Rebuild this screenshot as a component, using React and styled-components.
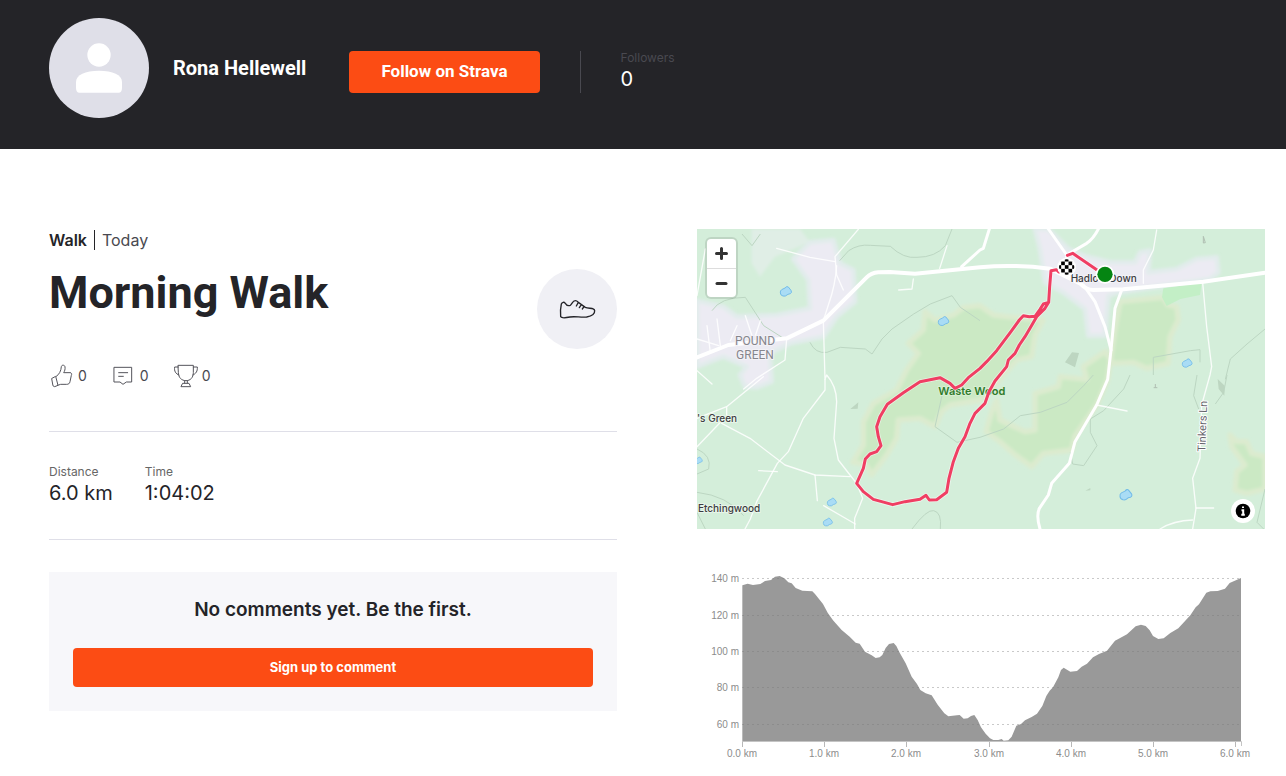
import React from 'react';
import styled, { createGlobalStyle } from 'styled-components';

const GlobalStyle = createGlobalStyle`
  *, *::before, *::after { box-sizing: border-box; }
  body {
    margin: 0;
    background: #fff;
    color: #242428;
    font-family: Inter, 'Liberation Sans', sans-serif;
  }
  h1, h2, p, dl, dd, ul { margin: 0; padding: 0; }
  svg { display: block; }
`;

const Header = styled.header`
  display: flex;
  align-items: center;
  gap: 43px;
  padding: 18px 21px 31px 49px;
  background: #242428;
  color: #fff;
`;

const Athlete = styled.a`
  display: flex;
  align-items: center;
  gap: 24px;
  color: inherit;
  text-decoration: none;
  font: 700 20px/26px Roboto, sans-serif;
`;

const Avatar = styled.span`
  width: 100px;
  height: 100px;
  border-radius: 50%;
  background: #dfdfe8;
  overflow: hidden;
`;

const Actions = styled.div`
  display: flex;
  align-items: center;
  gap: 40px;
  padding-top: 8px;
`;

const Button = styled.button`
  display: block;
  width: ${(p) => (p.$block ? '100%' : 'auto')};
  padding: ${(p) => (p.$block ? '9px 16px 10px' : '10px 32px 12px')};
  border: 0;
  border-radius: 4px;
  background: #fc4c14;
  color: #fff;
  font-family: ${(p) => (p.$block ? 'Inter' : 'Roboto')}, sans-serif;
  font-weight: 700;
  font-size: ${(p) => (p.$block ? 13 : 17)}px;
  line-height: 20px;
  cursor: pointer;
`;

const Followers = styled.dl`
  padding-left: 40px;
  border-left: 1px solid #494950;
`;

const Term = styled.dt`
  color: ${(p) => (p.$dim ? '#494950' : '#666')};
  font-size: 12px;
  line-height: ${(p) => (p.$dim ? 14 : 15)}px;
`;

const Value = styled.dd`
  font-size: 20px;
  line-height: 28px;
`;

const Main = styled.main`
  display: grid;
  grid-template-columns: minmax(0, 1fr) minmax(0, 1fr);
  align-items: start;
  gap: 80px;
  padding: 80px 21px 0 49px;
`;

const Column = styled.section`
  display: flex;
  flex-direction: column;
`;

const Kind = styled.p`
  display: flex;
  padding-top: 1px;
  font-size: 16px;
  line-height: 20px;
`;

const KindName = styled.strong`
  padding-right: 7px;
  border-right: 1px solid #242428;
  font-weight: 600;
`;

const When = styled.time`
  padding-left: 7px;
  color: #494950;
`;

const TitleRow = styled.div`
  display: flex;
  justify-content: space-between;
  margin-top: 19px;
`;

const Title = styled.h1`
  font-family: Roboto, sans-serif;
  font-size: 45px;
  line-height: 48px;
  font-weight: 700;
`;

const Badge = styled.div`
  display: grid;
  place-items: center;
  width: 80px;
  height: 80px;
  border-radius: 50%;
  background: #f0f0f5;
`;

const Counts = styled.ul`
  display: flex;
  gap: 25px;
  padding: 14px 0 42px 1px;
  list-style: none;
`;

const Count = styled.li`
  display: flex;
  align-items: center;
  gap: 4px;
  color: #494950;
  font-size: 14px;
  line-height: 26px;
`;

const Stats = styled.dl`
  display: flex;
  gap: 32px;
  padding: 32px 0;
  border: 1px solid #dfdfe8;
  border-width: 1px 0;
`;

const Comments = styled.section`
  margin-top: 32px;
  padding: 24px;
  background: #f7f7fa;
`;

const CommentsTitle = styled.h2`
  margin-bottom: 24px;
  font-size: 19px;
  line-height: 28px;
  font-weight: 600;
  text-align: center;
`;

const MapFrame = styled.div`
  position: relative;
  overflow: hidden;
  svg { width: 100%; }
`;

const ZoomControl = styled.div`
  position: absolute;
  top: 10px;
  left: 10px;
  width: 29px;
  border-radius: 4px;
  background: #fff;
  box-shadow: 0 0 0 2px rgba(0, 0, 0, 0.1);
`;

const ZoomButton = styled.button`
  display: grid;
  place-items: center;
  width: 100%;
  height: 29px;
  padding: 0;
  border: 0;
  background: none;
  & + & { border-top: 1px solid #ddd; }
  svg { width: 29px; }
`;

const InfoButton = styled.button`
  position: absolute;
  right: 10px;
  bottom: 6px;
  width: 24px;
  height: 24px;
  padding: 0;
  border: 0;
  border-radius: 50%;
  background: #fff;
`;

const Elevation = styled.svg`
  width: 100%;
  margin-top: 31px;
  font: 10px 'Liberation Sans', sans-serif;
  fill: #8c8c8c;
`;

const MapText = styled.text`
  font: ${(p) => p.$weight || 500} ${(p) => p.$size || 32}px ${(p) => p.$family || 'Inter'}, sans-serif;
  fill: ${(p) => p.$color || '#3c3c40'};
  stroke: ${(p) => p.$halo || '#e8f5ea'};
  stroke-width: 6px;
  stroke-linejoin: round;
  paint-order: stroke;
`;

const woods = [
  'M684 248L714 273L769 258L799 235L849 230L889 258L929 263L1039 273L1014 318L1004 383L959 393L909 451L870 500L849 513L759 528L734 548L714 593L669 568L604 573L599 628L569 678L524 738L505 705L467 700L499 648L499 578L529 523L599 483L629 423L664 373L634 343L679 303Z',
  'M1269 218L1399 205L1412 228L1439 233L1444 273L1419 323L1414 403L1349 418L1310 400L1249 403L1224 368L1159 413L1169 451L1089 443L1084 473L1014 493L1014 603L984 608L909 573L899 513L884 548L867 608L909 638L949 673L1004 713L1039 673L1124 663L1134 620L1199 528L1232 451L1254 300Z',
  'M1599 618L1619 638L1649 638L1664 673L1704 683L1704 780L1649 793L1614 783L1619 728L1644 708L1604 653Z',
];

const towns = [
  'M289 90L339 40L409 33L429 103L469 123L474 218L419 263L379 323L279 343L219 373L224 458L180 475L144 473L129 438L149 413L79 383L0 413L0 215L79 233L119 263L239 258L339 238L334 153Z',
  'M1014 0L1054 0L1114 60L1160 80L1240 100L1314 100L1329 70L1359 65L1354 130L1439 120L1499 90L1559 85L1564 130L1539 150L1264 190L1234 200L1224 320L1174 320L1164 240L1099 190L1044 160L1029 60Z',
];

const mainRoads = [
  'M0 385L94 348L269 328L379 275L509 145Q522 132 544 130L579 129L654 134L849 115Q950 105 1059 119L1149 163Q1168 183 1189 183L1279 181L1519 158L1704 131',
];

const roads = [
  'M794 113L849 63L859 58L877 0',
  'M1054 0L1109 78L1109 114',
  'M1204 0Q1190 28 1169 43L1109 78',
  'M1159 168L1194 218L1224 293L1242 363',
  'M1274 183L1254 238L1242 363L1232 451L1199 528L1134 638L1117 703L1064 763L1054 798L1027 838Q1017 860 1029 900',
];

const lanes = [
  'M484 1L414 83L419 138L439 183',
  'M239 58L339 85L414 98',
  'M419 110Q415 170 395 225L379 275L384 451L389 438Q418 470 419 518L411 628L424 693L459 738L479 763L497 808L473 868L473 900',
  'M384 451L384 483L319 568L274 668L241 703L179 818L160 870L144 900',
  'M74 583L159 628L264 708L354 738L459 743',
  'M199 443L89 533L0 568M89 533L89 560L0 653',
  'M269 328L264 393L179 448L140 480',
  'M1517 161L1529 293L1544 413L1539 438L1514 528L1509 688L1487 748L1497 838L1487 900',
  'M1389 900Q1429 875 1487 873M1497 837L1550 837',
  'M1379 3L1369 63L1339 123L1339 163',
  'M354 738L361 815M241 728L185 725M1199 528L1290 546',
  'M0 330L65 350M30 290L40 370M145 260L165 320M190 275L175 320M60 270L70 350M100 335L120 290M0 425L45 465',
  'M649 150L645 180L605 183M750 50L728 118M380 830L475 885M25 60L0 200',
];

const contours = [
  'M428 95L455 65Q485 45 520 49L580 52Q620 90 660 85Q715 85 745 50L765 0',
  'M45 245Q70 205 145 205L200 290L255 325',
  'M339 340Q355 375 390 370L430 355L505 360L525 375L555 330L585 300L650 255L700 225L765 200L790 235L849 275',
  'M735 500L714 593L780 640L849 625L920 600L970 560L1030 550L1110 520L1160 470L1189 438',
  'M1299 438L1280 480L1220 545L1180 570L1180 610L1200 650L1160 710L1127 705L1120 670',
  'M1369 438L1369 385L1480 365L1509 362L1509 400M1585 451L1600 390L1650 345L1704 300',
  'M1500 438L1490 500L1505 540M1590 438L1580 490L1555 525M1704 780L1680 880L1700 900',
  'M645 900Q690 840 710 845Q735 850 730 900M0 790Q90 800 140 860M0 850L25 900',
  'M135 15L165 50L190 15M0 660Q45 680 35 720L0 735',
];

const ponds = [[266, 187, 16], [739, 276, 15], [1470, 402, 14], [1286, 797, 17], [404, 819, 13], [392, 879, 13], [4, 694, 11]];

const route =
  'M1224 136L1197 121L1127 73L1111 79M1086 129L1078 122L1062 125L1058 173L1055 220L1039 225L1029 241L1014 262L997 263L979 260L967 273L944 305L899 365L869 398L849 418L814 446L794 468L774 478L759 463L729 446L669 458L619 491L571 526L549 563L539 593L544 623L552 650L539 668L519 675L505 690L499 718L479 763L499 788L529 811L554 818L587 827L624 818L669 811L687 799L697 813L719 812L749 790L756 748L769 698L784 658L804 623L819 583L834 553L864 523L876 488L894 456L929 413L934 393L954 373L967 348L984 323L999 298L1019 263L1044 238L1055 220';

const elevation = [
  [136, 76], [152, 71], [168, 75], [190, 72], [204, 63], [222, 60], [234, 50], [248, 48], [262, 55], [274, 67], [284, 70], [296, 84], [316, 92], [346, 94], [354, 102], [378, 132], [392, 158], [408, 181], [434, 210], [458, 230], [476, 248], [488, 251], [504, 275], [524, 286], [536, 294], [548, 292], [556, 285], [566, 264], [576, 252], [590, 249], [598, 258], [608, 278], [626, 310], [644, 350], [660, 372], [670, 390], [686, 400], [704, 406], [722, 434], [742, 460], [754, 469], [780, 466], [788, 465], [800, 476], [812, 475], [822, 468], [832, 465], [842, 480], [852, 502], [866, 521], [879, 535], [889, 540], [904, 540], [914, 537], [920, 542], [934, 541], [944, 530], [958, 497], [972, 492], [984, 481], [1004, 471], [1020, 461], [1036, 438], [1048, 408], [1058, 392], [1068, 382], [1084, 352], [1092, 330], [1100, 323], [1120, 335], [1140, 333], [1154, 320], [1170, 311], [1188, 292], [1206, 282], [1230, 272], [1254, 242], [1268, 235], [1290, 223], [1316, 199], [1332, 194], [1346, 198], [1358, 211], [1368, 228], [1384, 237], [1400, 235], [1420, 219], [1444, 205], [1480, 166], [1496, 142], [1506, 133], [1528, 98], [1540, 94], [1562, 93], [1584, 86], [1598, 69], [1632, 54],
];

const heights = [['140 m', 18], ['120 m', 55], ['100 m', 91], ['80 m', 127], ['60 m', 164]];

const checks = [];
for (let r = 0; r < 5; r += 1) for (let c = 0; c < 5; c += 1) if ((r + c) % 2 === 0) checks.push([c, r]);

function RouteMap() {
  return (
    <svg viewBox="0 0 1704 900" role="img" aria-label="Route map">
      <defs>
        <clipPath id="flag"><circle cx="1109" cy="114" r="23" /></clipPath>
        <filter id="soft"><feGaussianBlur stdDeviation="4" /></filter>
      </defs>
      <rect width="1704" height="900" fill="#d4eeda" />
      <path d="M164 0H309L339 40L234 83L189 143L164 103Z" fill="#e0eee6" filter="url(#soft)" />
      <g filter="url(#soft)">
        {towns.map((d) => <path key={d} d={d} fill="#ecebf3" stroke="#e2ecec" strokeWidth="14" strokeLinejoin="round" />)}
      </g>
      <g filter="url(#soft)">
        {woods.map((d) => <path key={d} d={d} fill="#cbe9c4" stroke="#dcebcf" strokeWidth="16" strokeLinejoin="round" />)}
      </g>
      <path d="M1399 178L1440 172L1514 161L1509 198L1450 210L1409 231L1395 205Z" fill="#c3efc6" />
      <path d="M1104 400L1125 370L1146 372L1134 415ZM460 540L484 520L482 539ZM1562 450L1583 470L1582 500L1565 480ZM1165 785L1180 777L1180 784Z" fill="#bdd6c1" />
      <path d="M1519 22V42L1525 41ZM1375 465V476M1370 476H1381" fill="none" stroke="#b0bfb2" strokeWidth="3" />
      <g fill="none" stroke="#bcd6c2" strokeWidth="3" strokeLinejoin="round">
        {contours.map((d) => <path key={d} d={d} />)}
      </g>
      <g fill="none" stroke="#fff" strokeLinejoin="round" strokeLinecap="round">
        {lanes.map((d) => <path key={d} d={d} strokeWidth="4" opacity="0.85" />)}
        {roads.map((d) => <path key={d} d={d} strokeWidth="9" />)}
        {mainRoads.map((d) => <path key={d} d={d} strokeWidth="12" />)}
      </g>
      {ponds.map(([x, y, r]) => (
        <path key={x} transform={`translate(${x} ${y}) scale(${r / 16})`} d="M-16 5Q-17 -2 -12 -5L-2 -10Q4 -17 8 -13L16 -3Q20 4 14 7L7 9Q-2 17 -8 14Q-15 13 -16 5Z" fill="#a9dcf5" stroke="#74bce8" strokeWidth="3" strokeLinejoin="round" />
      ))}
      <MapText x="174" y="347" textAnchor="middle" $size={36} $weight={400} $color="#85858c" $family="Roboto" $halo="#f3f2f7">POUND</MapText>
      <MapText x="174" y="389" textAnchor="middle" $size={36} $weight={400} $color="#85858c" $family="Roboto" $halo="#f3f2f7">GREEN</MapText>
      <MapText x="0" y="579" $size={30}>'s Green</MapText>
      <MapText x="3" y="849" $size={30}>Etchingwood</MapText>
      <MapText x="724" y="497" $size={33} $weight={600} $color="#2f7a2b" $halo="#d8efd3">Waste Wood</MapText>
      <MapText x="1121" y="159" $size={30} $halo="#f3f2f7">Hadlow Down</MapText>
      <MapText transform="translate(1525 668) rotate(-88)" $size={33} $weight={400} $color="#66666c" $family="Roboto" $halo="#fff">Tinkers Ln</MapText>
      <path d={route} fill="none" stroke="#fff" strokeWidth="14" strokeLinejoin="round" strokeLinecap="round" opacity="0.5" />
      <path d={route} fill="none" stroke="#f03e63" strokeWidth="9" strokeLinejoin="round" strokeLinecap="round" />
      <circle cx="1224" cy="136" r="28" fill="#fff" />
      <circle cx="1224" cy="136" r="23" fill="#058512" />
      <circle cx="1109" cy="114" r="28" fill="#fff" />
      <g clipPath="url(#flag)">
        {checks.map(([c, r]) => <rect key={`${c}-${r}`} x={1081.5 + c * 11} y={86.5 + r * 11} width="11" height="11" fill="#000" />)}
      </g>
    </svg>
  );
}

function ElevationChart() {
  const line = elevation.map((p) => p.join(' ')).join('L');
  return (
    <Elevation viewBox="0 0 568 210" role="img" aria-label="Elevation profile">
      <path transform="scale(0.33333)" d={`M${line}L1632 544H136Z`} fill="#999" />
      {heights.map(([label, y]) => (
        <g key={label}>
          <path d={`M45 ${y + 0.5}H544`} stroke="#777" strokeOpacity="0.4" strokeDasharray="2 3" />
          <text x="42" y={y + 4} textAnchor="end">{label}</text>
        </g>
      ))}
      <path d="M45 181.5H544.5V186" fill="none" stroke="#c4c4c4" />
      {[0, 1, 2, 3, 4, 5, 6].map((km) => (
        <g key={km}>
          <path d={`M${45.5 + Math.round(km * 82.2)} 182V187`} stroke="#b8b8b8" />
          <text x={45 + Math.round(km * 82.2)} y="197" textAnchor="middle">{`${km}.0 km`}</text>
        </g>
      ))}
    </Elevation>
  );
}

const line = { fill: 'none', stroke: '#55555c', strokeWidth: 3, strokeLinejoin: 'round', strokeLinecap: 'round' };

const ThumbIcon = () => (
  <svg width="24" height="24" viewBox="28 435 72 72" {...line}>
    <path d="M47 472C56 466 61 456 62 443C63 436 73 438 73 444C74 451 72 456 69 461H88C93 461 94 465 92 469L88 488C87 494 83 496 78 496H60L51 499" />
    <path d="M34 478L45 472L52 499L42 503L38 501Z" />
  </svg>
);

const CommentIcon = () => (
  <svg width="24" height="24" viewBox="216 435 72 72" {...line}>
    <path d="M223 445H275V489H259L249 496L240 489H223Z M236 461H263 M236 472H250" />
  </svg>
);

const TrophyIcon = () => (
  <svg width="24" height="24" viewBox="402 435 72 72" {...line}>
    <path d="M415 439H460V461C460 476 451 485 438 485C425 485 415 476 415 461Z M415 444H404C402 456 407 465 417 468 M460 444H472C473 456 468 465 458 468 M434 485V492M442 485V492 M429 493H447L452 503H424Z" />
  </svg>
);

const ShoeIcon = () => (
  <svg width="40" height="40" viewBox="111 102 120 120" {...line} stroke="#242428" strokeWidth="4">
    <path d="M124 147C126 141 132 140 136 145C140 152 146 153 151 151C156 147 158 137 166 137C170 137 172 139 175 142L196 157C206 162 223 157 224 167C225 177 215 183 200 186C182 188 165 183 150 186C140 188 124 189 122 185C121 172 121 160 124 147ZM175 142L169 153M184 149L178 158M192 155L187 162" />
  </svg>
);

export default function App() {
  return (
    <>
      <GlobalStyle />
      <Header>
        <Athlete href="#athlete">
          <Avatar>
            <svg viewBox="57 54 300 300" fill="#fff">
              <circle cx="207" cy="165" r="35" />
              <path d="M138 246C138 224 166 212 207 212C248 212 276 224 276 246V263C276 273 272 278 266 278H148C142 278 138 273 138 263Z" />
            </svg>
          </Avatar>
          Rona Hellewell
        </Athlete>
        <Actions>
          <Button>Follow on Strava</Button>
          <Followers>
            <Term $dim>Followers</Term>
            <Value>0</Value>
          </Followers>
        </Actions>
      </Header>
      <Main>
        <Column>
          <Kind><KindName>Walk</KindName><When>Today</When></Kind>
          <TitleRow>
            <Title>Morning Walk</Title>
            <Badge><ShoeIcon /></Badge>
          </TitleRow>
          <Counts>
            <Count><ThumbIcon />0</Count>
            <Count><CommentIcon />0</Count>
            <Count><TrophyIcon />0</Count>
          </Counts>
          <Stats>
            <div><Term>Distance</Term><Value>6.0 km</Value></div>
            <div><Term>Time</Term><Value>1:04:02</Value></div>
          </Stats>
          <Comments>
            <CommentsTitle>No comments yet. Be the first.</CommentsTitle>
            <Button $block>Sign up to comment</Button>
          </Comments>
        </Column>
        <Column>
          <MapFrame>
            <RouteMap />
            <ZoomControl>
              <ZoomButton aria-label="Zoom in">
                <svg width="29" height="29" viewBox="0 0 29 29"><path d="M14.5 9.500V19.500M9.500 14.500H19.500" stroke="#333" strokeWidth="3" strokeLinecap="round" /></svg>
              </ZoomButton>
              <ZoomButton aria-label="Zoom out">
                <svg width="29" height="29" viewBox="0 0 29 29"><path d="M10 14.500H19" stroke="#333" strokeWidth="3" strokeLinecap="round" /></svg>
              </ZoomButton>
            </ZoomControl>
            <InfoButton aria-label="Map information">
              <svg viewBox="0 0 24 24">
                <circle cx="12" cy="12" r="7.3" />
                <path d="M12 7.500V9M10.500 11.200H12.200V15.500M10.300 15.800H13.800" fill="none" stroke="#fff" strokeWidth="2" />
              </svg>
            </InfoButton>
          </MapFrame>
          <ElevationChart />
        </Column>
      </Main>
    </>
  );
}
